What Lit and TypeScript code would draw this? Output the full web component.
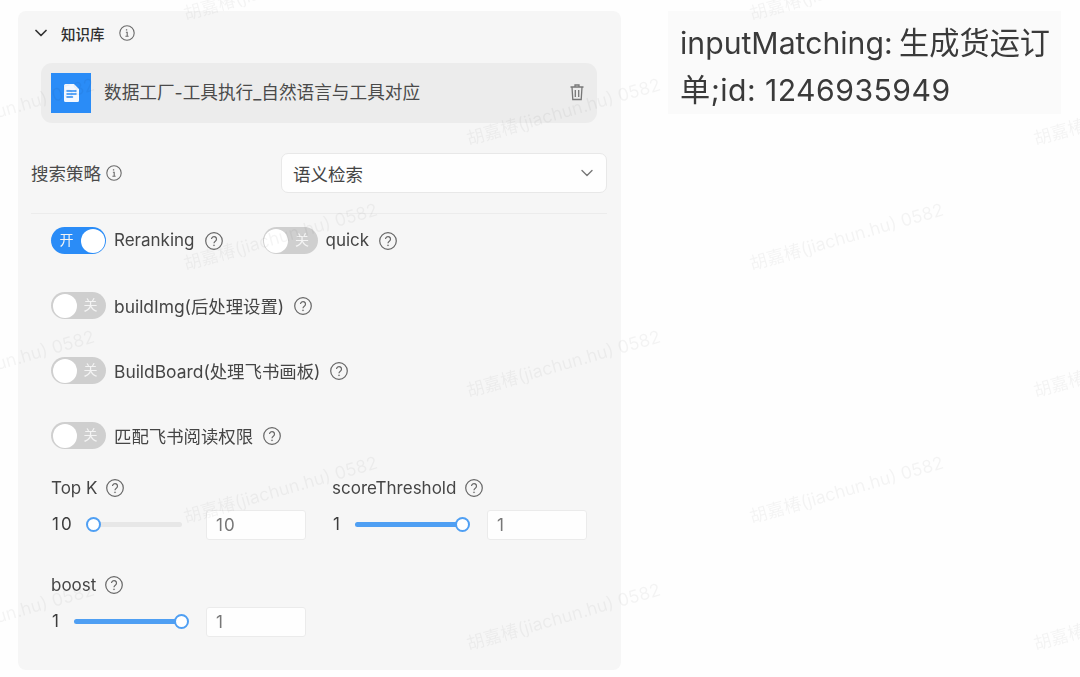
import { LitElement, html, css } from "lit";
import { customElement } from "lit/decorators.js";

const infoIcon = html`<svg class="ico" viewBox="0 0 16 16" fill="none" stroke="#6a6a6a" stroke-width="1.1"><circle cx="8" cy="8" r="7.2"/><path d="M6.9 4.900h1.300M6.900 7.300h1.300v3.900M6.400 11.200h3.200"/></svg>`;
const helpIcon = html`<svg class="ico help" viewBox="0 0 18 18" fill="none" stroke="#666" stroke-width="1.200"><circle cx="9" cy="9" r="8.300"/><path d="M6.500 7.100a2.500 2.500 0 1 1 3.800 2.100c-.9.600-1.300 1-1.300 2"/><circle cx="9" cy="13.300" r=".6" fill="#666" stroke="#666" stroke-width=".4"/></svg>`;
const chevron = (color: string, w: string) => html`<svg class="chev" viewBox="0 0 12 8" fill="none" stroke="${color}" stroke-width="${w}" stroke-linecap="round" stroke-linejoin="round"><path d="M1 1.500l5 5 5-5"/></svg>`;

const toggles = [
  [
    { label: "Reranking", on: true, cjk: false },
    { label: "quick", on: false, cjk: false },
  ],
  [{ label: "buildImg(后处理设置)", on: false, cjk: true }],
  [{ label: "BuildBoard(处理飞书画板)", on: false, cjk: true }],
  [{ label: "匹配飞书阅读权限", on: false, cjk: true }],
];

const sliders = [
  { label: "Top K", value: "10", trackW: 95, pct: 7 },
  { label: "scoreThreshold", value: "1", trackW: 107, pct: 100 },
  { label: "boost", value: "1", trackW: 107, pct: 100 },
];

const marks: [number, number][] = [];
for (const y of [-15, 235, 488]) for (const x of [280, 846]) marks.push([x, y]);
for (const y of [110, 362, 615]) for (const x of [-3, 563, 1130]) marks.push([x, y]);

@customElement("app-root")
export class AppRoot extends LitElement {
  static styles = css`
    :host {
      display: block;
      position: relative;
      width: 1080px;
      height: 677px;
      overflow: hidden;
      background: #fefefe;
      color: #3c3c3c;
      font-family: Inter, "Noto Sans CJK SC", sans-serif;
      font-size: 17px;
    }
    .page { display: flex; align-items: flex-start; padding: 11px 18px 0; filter: blur(0.45px); }
    .panel {
      width: 603px; height: 659px; box-sizing: border-box;
      background: #f6f6f6; border-radius: 8px;
      display: flex; flex-direction: column; flex: none;
    }
    .ico { width: 16px; height: 16px; flex: none; }
    .help { width: 18px; height: 18px; }
    .chev { width: 12px; height: 8px; flex: none; }
    .head { height: 44px; display: flex; align-items: center; padding-left: 17px; }
    .head .title { margin-left: 14px; font-size: 14.500px; font-weight: 500; color: #2e2e2e; }
    .head .ico { margin-left: 14px; }
    .kb {
      margin: 8px 24px 0 23px; height: 60px; border-radius: 11px; background: #ececec;
      display: flex; align-items: center; padding: 0 12px 0 10px;
    }
    .doc { width: 40px; height: 40px; background: #2a8cf7; display: flex; align-items: center; justify-content: center; flex: none; }
    .doc svg { width: 17px; height: 20px; }
    .kb .name { margin: 0 0 3px 13px; flex: 1; font-size: 17.650px; color: #4a4a4a; }
    .trash { width: 16px; height: 18px; margin-bottom: 2px; }
    .search { margin: 30px 14px 0 13px; height: 40px; display: flex; align-items: center; }
    .search .lab { font-size: 17.500px; color: #4a4a4a; margin-bottom: 2px; }
    .search .ico { margin-left: 5px; }
    .select {
      margin-left: auto; width: 326px; height: 40px; box-sizing: border-box;
      background: #fefefe; border: 1px solid #e8e8e8; border-radius: 7px;
      display: flex; align-items: center; justify-content: space-between; padding: 0 13px 0 11px;
      font-size: 17.500px; color: #444;
    }
    .rule { margin: 20px 14px 0 13px; height: 1px; background: #ececec; }
    .toggles { margin: 13px 0 0 33px; display: flex; flex-direction: column; gap: 38px; }
    .trow { display: flex; height: 27px; align-items: center; gap: 40px; }
    .titem { display: flex; align-items: center; }
    .titem .txt { margin: 0 10px 1px 8px; color: #454545; }
    .titem .txt.cjk { font-size: 17.400px; }
    .sw {
      width: 55px; height: 27px; border-radius: 14px; box-sizing: border-box; padding: 1.500px;
      background: #cfcfcf; display: flex; align-items: center; flex: none;
      color: #f4f4f4; font-size: 14px; line-height: 24px;
    }
    .sw i { width: 24px; height: 24px; border-radius: 50%; background: #fff; display: block; flex: none; }
    .sw span { flex: 1; text-align: center; padding-bottom: 2px; }
    .sw.on { background: #2a8cf7; flex-direction: row-reverse; }
    .grid {
      margin: 27px 0 0 33px; display: grid; grid-template-columns: 281px 281px; row-gap: 33px;
    }
    .lbl { height: 24px; display: flex; align-items: center; gap: 9px; color: #454545; }
    .srow { margin-top: 10px; height: 30px; display: flex; align-items: center; }
    .val { margin: 0 0 2px 1px; letter-spacing: 2px; }
    .track { margin: 0 0 2px 13.500px; height: 5px; border-radius: 3px; background: #e7e7e7; position: relative; flex: none; }
    .fill { height: 100%; border-radius: 3px; background: #4f9ff3; }
    .thumb {
      position: absolute; top: 50%; width: 15px; height: 15px; box-sizing: border-box;
      margin: -7.500px 0 0 -7.500px; border-radius: 50%; background: #fff; border: 2.500px solid #4f9ff3;
    }
    .num {
      margin-left: auto; margin-right: 26px; width: 100px; height: 30px; box-sizing: border-box;
      background: #fefefe; border: 1px solid #ebebeb; border-radius: 3px;
      padding-left: 9px; display: flex; align-items: center; color: #777;
      letter-spacing: 1px;
    }
    .note {
      margin-left: 47px; width: 393px; height: 103px; box-sizing: border-box; flex: none;
      background: #fafafa; padding: 8.500px 0 0 12px;
      font-size: 30.200px; line-height: 47px; color: #3a3a3a;
    }
    .note .l1 { word-spacing: -2px; }
    .note .l2 { letter-spacing: .45px; }
    .wm { position: absolute; inset: 0; pointer-events: none; }
    .wm span {
      position: absolute; white-space: nowrap; font-size: 17.700px; color: rgba(0, 0, 0, 0.042);
      transform: translate(-50%, -50%) rotate(-16deg);
    }
  `;

  private sw(on: boolean) {
    return html`<div class="sw ${on ? "on" : ""}"><i></i><span>${on ? "开" : "关"}</span></div>`;
  }

  render() {
    return html`
      <div class="page">
        <section class="panel">
          <div class="head">${chevron("#333", "1.700")}<span class="title">知识库</span>${infoIcon}</div>
          <div class="kb">
            <div class="doc">
              <svg viewBox="0 0 17 20"><path d="M2.500 1h8.500l5 5v11.500a1.500 1.500 0 0 1-1.500 1.500h-12A1.500 1.500 0 0 1 1 17.500V2.500A1.500 1.500 0 0 1 2.500 1z" fill="#f3f8ff"/><path d="M4 8h9M4 11h9M4 14h5.500" stroke="#2a8cf7" stroke-width="1.500" stroke-linecap="round"/></svg>
            </div>
            <span class="name">数据工厂-工具执行_自然语言与工具对应</span>
            <svg class="trash" viewBox="0 0 16 18" fill="none" stroke="#777" stroke-width="1.300"><path d="M1.500 4h13M6 4V2h4v2M3 4l.8 12.500h8.400L13 4M6.300 7v7M9.700 7v7"/></svg>
          </div>
          <div class="search">
            <span class="lab">搜索策略</span>${infoIcon}
            <div class="select"><span>语义检索</span>${chevron("#777", "1.400")}</div>
          </div>
          <div class="rule"></div>
          <div class="toggles">
            ${toggles.map(
              (row) => html`<div class="trow">
                ${row.map(
                  (t) => html`<div class="titem">${this.sw(t.on)}<span class="txt ${t.cjk ? "cjk" : ""}">${t.label}</span>${helpIcon}</div>`
                )}
              </div>`
            )}
          </div>
          <div class="grid">
            ${sliders.map(
              (s) => html`<div>
                <div class="lbl">${s.label}${helpIcon}</div>
                <div class="srow">
                  <span class="val">${s.value}</span>
                  <div class="track" style="width:${s.trackW}px">
                    <div class="fill" style="width:${s.pct}%"></div>
                    <div class="thumb" style="left:${s.pct}%"></div>
                  </div>
                  <div class="num">${s.value}</div>
                </div>
              </div>`
            )}
          </div>
        </section>
        <aside class="note"><div class="l1">inputMatching: 生成货运订</div><div class="l2">单;id: 1246935949</div></aside>
      </div>
      <div class="wm">
        ${marks.map(([x, y]) => html`<span style="left:${x}px;top:${y}px">胡嘉椿(jiachun.hu) 0582</span>`)}
      </div>
    `;
  }
}
